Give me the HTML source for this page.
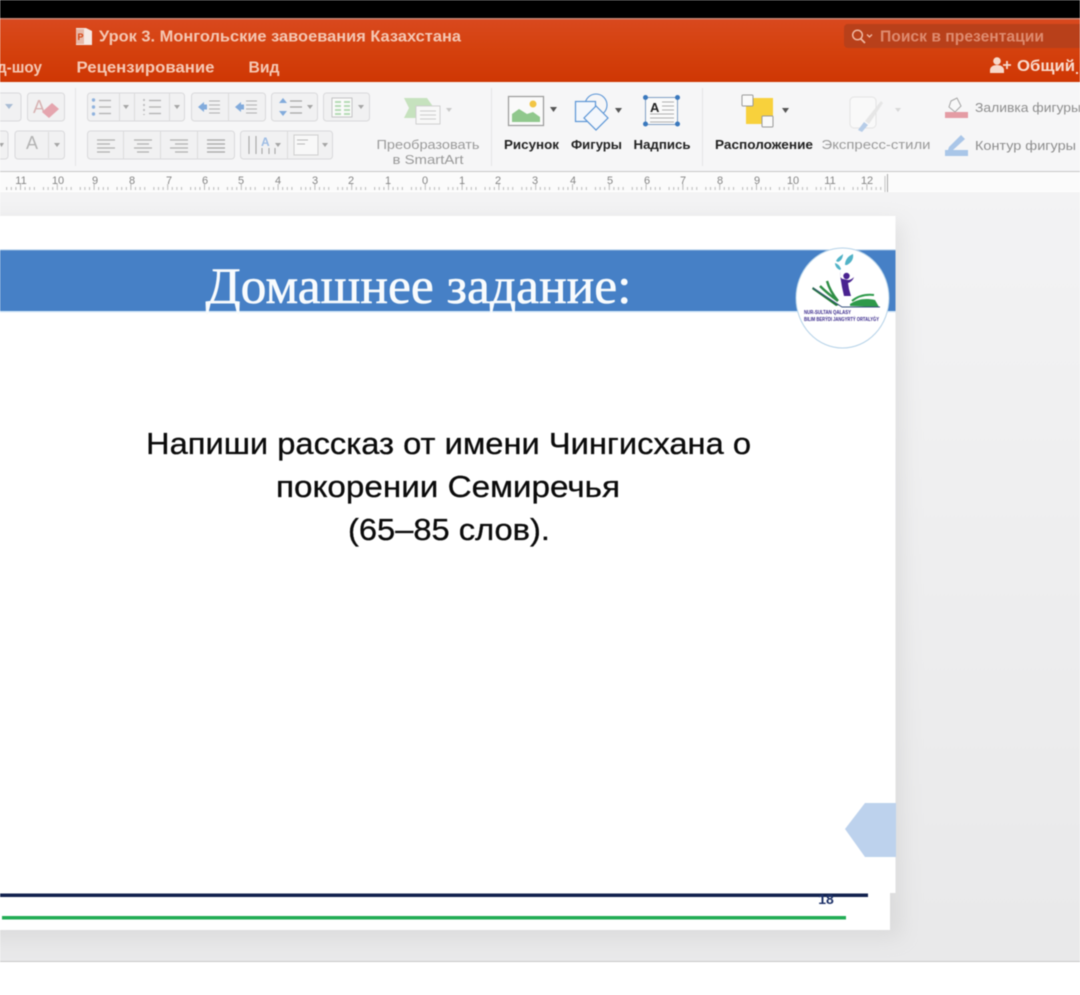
<!DOCTYPE html>
<html lang="ru">
<head>
<meta charset="utf-8">
<title>Урок 3. Монгольские завоевания Казахстана</title>
<style>
html,body{margin:0;padding:0;width:1080px;height:995px;overflow:hidden;background:#fff}
svg{display:block;filter:blur(.5px)}
text{font-family:"Liberation Sans","DejaVu Sans",sans-serif}
.serif{font-family:"Liberation Serif",serif}
.tb{font-size:13px;fill:#222;font-weight:700}
.gr{font-size:13px;fill:#9a9a9a}
.rn{font-size:11px;fill:#858585;text-anchor:middle}
.btn{fill:#f1f1f2;stroke:#d9d9db;stroke-width:1}
</style>
</head>
<body>
<svg width="1080" height="995" viewBox="0 0 1080 995" xmlns="http://www.w3.org/2000/svg">
<defs>
<linearGradient id="hd" x1="0" y1="0" x2="0" y2="1"><stop offset="0" stop-color="#d9491f"/><stop offset=".45" stop-color="#d5420f"/><stop offset="1" stop-color="#cf3704"/></linearGradient>
<linearGradient id="ws" x1="0" y1="0" x2="0" y2="1"><stop offset="0" stop-color="#f3f3f4"/><stop offset="1" stop-color="#e9e9ea"/></linearGradient>
<pattern id="tk" x="2.100" y="172" width="36.800" height="20" patternUnits="userSpaceOnUse">
<path d="M4.600 15v3M9.200 15v3M13.800 15v3M18.400 12v6M23 15v3M27.600 15v3M32.200 15v3" stroke="#a8a8a8" stroke-width=".8"/>
</pattern>
<filter id="sh" x="-5%" y="-5%" width="110%" height="110%"><feGaussianBlur stdDeviation="10"/></filter>
</defs>

<rect width="1080" height="995" fill="#fff"/>
<rect width="1080" height="18" fill="#000"/>
<rect y="18" width="1080" height="64" fill="url(#hd)"/>
<rect y="18" width="1080" height="1.500" fill="#c98574"/>

<!-- title bar -->
<path d="M76 28h10l6 3v14H76z" fill="#f6e9e4"/>
<path d="M76 29h8v15h-8z" fill="#e7b8a8"/>
<text x="77.500" y="40" font-size="9" font-weight="700" fill="#d5420f">P</text>
<text x="99" y="41.500" font-size="15.500" font-weight="700" fill="#f4c7b3" textLength="362" lengthAdjust="spacingAndGlyphs">Урок 3. Монгольские завоевания Казахстана</text>
<text x="-3" y="72.500" font-size="15.500" font-weight="700" fill="#f5c9b5" textLength="45" lengthAdjust="spacingAndGlyphs">д-шоу</text>
<text x="76.500" y="72.500" font-size="15.500" font-weight="700" fill="#f5c9b5" textLength="138" lengthAdjust="spacingAndGlyphs">Рецензирование</text>
<text x="248.500" y="72.500" font-size="15.500" font-weight="700" fill="#f5c9b5" textLength="31" lengthAdjust="spacingAndGlyphs">Вид</text>

<rect x="844" y="24" width="240" height="24" rx="4" fill="#b8401a"/>
<circle cx="857.500" cy="35" r="4.800" fill="none" stroke="#f0b9a3" stroke-width="1.500"/>
<path d="M861 39l4 4" stroke="#f0b9a3" stroke-width="1.700"/>
<path d="M867 34.500l2.500 2.500 2.500-2.500" stroke="#f0b9a3" stroke-width="1.300" fill="none"/>
<text x="880" y="41.500" font-size="15.500" font-weight="700" fill="#de8b6f" textLength="164" lengthAdjust="spacingAndGlyphs">Поиск в презентации</text>

<circle cx="997" cy="61" r="3.800" fill="#f7d9cb"/>
<path d="M990 73v-3c0-3 3-5 7-5s7 2 7 5v3z" fill="#f7d9cb"/>
<path d="M1007 61v8M1003 65h8" stroke="#f7d9cb" stroke-width="1.800"/>
<text x="1017" y="71" font-size="15.500" font-weight="700" fill="#f9dccf" textLength="58" lengthAdjust="spacingAndGlyphs">Общий</text>
<rect x="1076" y="72" width="2" height="2" fill="#f9dccf"/>

<!-- toolbar -->
<rect y="82" width="1080" height="89" fill="#f6f6f7"/>
<rect y="171" width="1080" height="1" fill="#c9c9c9"/>
<path d="M75.500 88v78M491.500 88v78M702.500 88v78" stroke="#e5e5e6"/>

<!-- left clipped buttons -->
<rect x="-8" y="93" width="29" height="28" rx="3" class="btn"/>
<path d="M5 104h8l-4 5z" fill="#a9bcd4"/>
<rect x="27.500" y="93" width="37" height="28" rx="3" class="btn"/>
<text x="33" y="113" font-size="18" fill="#d8b3b3">A</text>
<path d="M42 112l10-9 7 6-10 9z" fill="#e5a5ae"/>
<rect x="-8" y="131" width="16" height="28" rx="3" class="btn"/>
<path d="M-1 143h5l-2.500 4z" fill="#a5a5a5"/>
<rect x="15" y="131" width="49.500" height="28" rx="3" class="btn"/>
<path d="M48.500 132v26" stroke="#dcdcdc"/>
<text x="26" y="149" font-size="18" fill="#b3b3b3">A</text>
<path d="M54 143h6l-3 4z" fill="#a5a5a5"/>

<!-- row 1 -->
<rect x="87.500" y="93" width="97" height="28" rx="3" class="btn"/>
<path d="M134.500 93v28M119.500 93v28M169.500 93v28" stroke="#dcdcdc"/>
<circle cx="93.500" cy="100" r="1.700" fill="#8fb2de"/><circle cx="93.500" cy="107" r="1.700" fill="#8fb2de"/><circle cx="93.500" cy="114" r="1.700" fill="#8fb2de"/>
<path d="M99 100.500h12M99 107h12M99 113.500h12M149 100.500h12M149 107h12M149 113.500h12" stroke="#b0b0b0" stroke-width="1.200"/>
<path d="M144 99v16" stroke="#b5b5b5" stroke-width="1.500" stroke-dasharray="2 3"/>
<path d="M123 105h6l-3 4zM174 105h6l-3 4z" fill="#a5a5a5"/>
<rect x="191.500" y="93" width="74" height="28" rx="3" class="btn"/>
<path d="M228.500 93v28" stroke="#dcdcdc"/>
<path d="M198 107l6-5v10zM235 107l6-5v10z" fill="#82abdc"/><rect x="203" y="104.500" width="4" height="5" fill="#82abdc"/><rect x="240" y="104.500" width="4" height="5" fill="#82abdc"/>
<path d="M209 101h11M209 105h11M209 109h11M209 113h11M246 101h11M246 105h11M246 109h11M246 113h11" stroke="#b0b0b0" stroke-width="1.100"/>
<rect x="271.500" y="93" width="46" height="28" rx="3" class="btn"/>
<path d="M283 98l-4 5h8zM283 116l-4-5h8z" fill="#82abdc"/>
<path d="M290 101h12M290 107h12M290 113h12" stroke="#a5a5a5" stroke-width="1.300"/>
<path d="M307 105h6l-3 4z" fill="#a5a5a5"/>
<rect x="323.500" y="93" width="46" height="28" rx="3" class="btn"/>
<rect x="332" y="98" width="20" height="19" fill="#fafafa" stroke="#c4c4c4"/>
<path d="M335 102h6M344 102h6M335 106h6M344 106h6M335 110h6M344 110h6M335 114h6M344 114h6" stroke="#b5dcb5" stroke-width="2"/>
<path d="M358 105h6l-3 4z" fill="#a5a5a5"/>

<!-- row 2 -->
<rect x="87.500" y="131" width="147" height="28" rx="3" class="btn"/>
<path d="M123.500 131v28M160.500 131v28M197.500 131v28" stroke="#dcdcdc"/>
<path d="M97 140h18M97 144h13M97 148h18M97 152h13" stroke="#b0b0b0" stroke-width="1.200"/>
<path d="M134 140h18M137 144h12M134 148h18M137 152h12" stroke="#b0b0b0" stroke-width="1.200"/>
<path d="M170 140h18M175 144h13M170 148h18M175 152h13" stroke="#b0b0b0" stroke-width="1.200"/>
<path d="M207 140h18M207 144h18M207 148h18M207 152h18" stroke="#a5a5a5" stroke-width="1.300"/>
<rect x="240.500" y="131" width="92" height="28" rx="3" class="btn"/>
<path d="M287.500 131v28" stroke="#dcdcdc"/>
<path d="M249 136v18M256 136v18M262 148v6M269 148v6M275 148v6" stroke="#a5a5a5" stroke-width="1.100"/>
<text x="261" y="146" font-size="12" font-weight="700" fill="#9dbce4">A</text>
<path d="M275 143h6l-3 4z" fill="#a5a5a5"/>
<rect x="294" y="135" width="24" height="20" fill="#f8f8f8" stroke="#cfcfcf"/>
<path d="M297 140h11M297 144h8" stroke="#b8b8b8"/>
<path d="M322 143h6l-3 4z" fill="#a5a5a5"/>

<!-- SmartArt -->
<path d="M404 98h23l7 10-7 10h-23l5-10z" fill="#c6e2be"/>
<rect x="416" y="106" width="24" height="18" fill="#f8f8f8" stroke="#d0d0d0"/>
<path d="M420 111h16M420 115h16M420 119h16" stroke="#cccccc"/>
<path d="M446 108h6l-3 4z" fill="#c9c9c9"/>
<text x="428" y="149" class="gr" text-anchor="middle" textLength="103" lengthAdjust="spacingAndGlyphs">Преобразовать</text>
<text x="428" y="164" class="gr" text-anchor="middle" textLength="71" lengthAdjust="spacingAndGlyphs">в SmartArt</text>

<!-- Picture -->
<rect x="508.500" y="96.500" width="35" height="29" fill="#fafafa" stroke="#9a9a9a" stroke-width="1.200"/>
<path d="M512 122v-8l7-5 8 5 6-2 7 5v5z" fill="#90c88d"/>
<circle cx="533" cy="104" r="3.500" fill="#f2c544"/>
<path d="M550 107h7l-3.500 5z" fill="#555"/>
<text x="531.500" y="149" class="tb" text-anchor="middle" textLength="55" lengthAdjust="spacingAndGlyphs">Рисунок</text>

<!-- Shapes -->
<circle cx="596" cy="105" r="11" fill="#f6f6f7" stroke="#5a95d6" stroke-width="1.100"/>
<rect x="575.500" y="101.500" width="20" height="20" fill="#f3f7fc" stroke="#5a95d6" stroke-width="1.200"/>
<path d="M596 106l12 12-12 12-12-12z" fill="#f3f7fc" stroke="#5a95d6" stroke-width="1.200"/>
<path d="M615 108h7l-3.500 5z" fill="#555"/>
<text x="596.500" y="149" class="tb" text-anchor="middle" textLength="51" lengthAdjust="spacingAndGlyphs">Фигуры</text>

<!-- Textbox -->
<rect x="645.500" y="97.500" width="32" height="27" fill="#fafafa" stroke="#7f9fc4"/>
<circle cx="645.500" cy="97.500" r="2.500" fill="#3a78bd"/><circle cx="677.500" cy="97.500" r="2.500" fill="#3a78bd"/><circle cx="645.500" cy="124" r="2.500" fill="#3a78bd"/><circle cx="677.500" cy="124" r="2.500" fill="#3a78bd"/>
<text x="650" y="112" font-size="13" font-weight="700" fill="#222">A</text>
<path d="M662 102h12M662 106h12M662 110h12M650 114h24M650 118h24M650 122h24" stroke="#b0b0b0"/>
<text x="662" y="149" class="tb" text-anchor="middle" textLength="57" lengthAdjust="spacingAndGlyphs">Надпись</text>

<!-- Arrange -->
<rect x="746" y="98" width="27" height="26" fill="#f8d13c"/>
<rect x="742" y="95" width="11" height="11" rx="1" fill="#fafafa" stroke="#999"/>
<rect x="762" y="116" width="11" height="11" rx="1" fill="#fafafa" stroke="#999"/>
<path d="M782 108h7l-3.500 5z" fill="#555"/>
<text x="764" y="149" class="tb" text-anchor="middle" textLength="98" lengthAdjust="spacingAndGlyphs">Расположение</text>

<!-- Quick styles -->
<rect x="850" y="97" width="26" height="31" rx="4" fill="#f9f9f9" stroke="#e4e4e4"/>
<path d="M858 130l6-8 4 3-6 7z" fill="#b7cde8"/>
<path d="M865 121l16-20 2 2-14 21z" fill="#e6e6e6"/>
<path d="M895 108h6l-3 4z" fill="#d8d8d8"/>
<text x="876" y="149" class="gr" text-anchor="middle" textLength="109" lengthAdjust="spacingAndGlyphs">Экспресс-стили</text>

<!-- Fill/Outline -->
<path d="M951 101l6-3 4 8-6 6-6-5z" fill="#f8f8f8" stroke="#a5a5a5"/>
<rect x="945" y="112" width="23" height="6" fill="#e49ca4"/>
<text x="975" y="112" class="gr" style="fill:#8e8e8e" textLength="106" lengthAdjust="spacingAndGlyphs">Заливка фигуры</text>
<path d="M949 147l12-12 4 4-12 11h-5z" fill="#aac6e8"/>
<rect x="945" y="150" width="23" height="6" fill="#a9c6e8"/>
<text x="975" y="150" class="gr" style="fill:#8e8e8e" textLength="101" lengthAdjust="spacingAndGlyphs">Контур фигуры</text>

<!-- ruler -->
<rect y="172" width="1080" height="19" fill="#fbfbfb"/>
<rect x="0" y="172" width="885" height="20" fill="url(#tk)"/>
<path d="M887.500 174v18" stroke="#a8a8a8"/>
<path d="M885 176v16" stroke="#c4c4c4"/>
<text class="rn" x="21" y="184">11</text><text class="rn" x="58" y="184">10</text><text class="rn" x="95" y="184">9</text><text class="rn" x="132" y="184">8</text><text class="rn" x="169" y="184">7</text><text class="rn" x="205" y="184">6</text><text class="rn" x="241" y="184">5</text><text class="rn" x="278" y="184">4</text><text class="rn" x="315" y="184">3</text><text class="rn" x="351" y="184">2</text><text class="rn" x="388" y="184">1</text><text class="rn" x="425" y="184">0</text><text class="rn" x="462" y="184">1</text><text class="rn" x="498" y="184">2</text><text class="rn" x="535" y="184">3</text><text class="rn" x="573" y="184">4</text><text class="rn" x="610" y="184">5</text><text class="rn" x="647" y="184">6</text><text class="rn" x="683" y="184">7</text><text class="rn" x="720" y="184">8</text><text class="rn" x="757" y="184">9</text><text class="rn" x="793" y="184">10</text><text class="rn" x="830" y="184">11</text><text class="rn" x="867" y="184">12</text>

<!-- workspace -->
<rect y="192" width="1080" height="769" fill="url(#ws)"/>
<rect y="961" width="1080" height="1" fill="#c8c8c8"/>
<rect x="-20" y="222" width="922" height="716" fill="#c4c4c4" opacity=".4" filter="url(#sh)"/>

<!-- slide -->
<rect x="0" y="216" width="895.500" height="677" fill="#fff"/>
<rect x="0" y="893" width="890" height="37" fill="#fff"/>
<rect x="0" y="250" width="895.500" height="61.500" fill="#4680c6"/>
<rect x="0" y="249.500" width="895.500" height="1" fill="#9ec0e2"/>
<rect x="0" y="311" width="895.500" height="1.500" fill="#d8eaf8"/>
<text class="serif" x="205.500" y="303" font-size="50.500" fill="#f8fbfd" stroke="#f8fbfd" stroke-width=".6" textLength="426" lengthAdjust="spacingAndGlyphs">Домашнее задание:</text>

<text x="146" y="454" font-size="31" fill="#0b0b0b" stroke="#0b0b0b" stroke-width=".3" textLength="605" lengthAdjust="spacingAndGlyphs">Напиши рассказ от имени Чингисхана о</text>
<text x="276" y="497" font-size="31" fill="#0b0b0b" stroke="#0b0b0b" stroke-width=".3" textLength="344" lengthAdjust="spacingAndGlyphs">покорении Семиречья</text>
<text x="348" y="540" font-size="31" fill="#0b0b0b" stroke="#0b0b0b" stroke-width=".3" textLength="202" lengthAdjust="spacingAndGlyphs">(65–85 слов).</text>

<!-- logo -->
<ellipse cx="842.500" cy="298" rx="46.500" ry="50" fill="#fff" stroke="#b5d2e8" stroke-width="1"/>
<path d="M836 261c2-4 5-5 7-7 0 4-2 7-5 8zM845 265c0-5 3-9 8-11 1 5-2 9-6 11zM841 269c-1-3-3-5-6-6 0 3 2 6 5 7z" fill="#52b3c7"/>
<circle cx="846.500" cy="276" r="3.200" fill="#4a2390"/>
<path d="M840 271c0 5 0 7 3 8l5 1c2 0 4-1 6-3-1 3-3 5-6 6l1 6 2 7-7 0-2-9c-1-6-2-11-2-16z" fill="#4a2390"/>
<path d="M813 287l26 18-3 1-24-17z" fill="#227a36"/>
<path d="M820 286c5 5 11 10 18 15M827 281c2 7 6 14 11 20" stroke="#2f8e45" stroke-width="2.400" fill="none"/>
<path d="M850 304c8-5 15-6 25-4l4 7-29-1z" fill="#2e9a4a"/>
<path d="M852 301c6-5 13-7 22-6" stroke="#2e9a4a" stroke-width="2" fill="none"/>
<path d="M813 288l29 19h38" stroke="#36507c" stroke-width="1" fill="none"/>
<text x="804" y="314" font-size="5.500" font-weight="700" fill="#39298b" textLength="47" lengthAdjust="spacingAndGlyphs">NUR-SULTAN QALASY</text>
<text x="804" y="321" font-size="5.500" font-weight="700" fill="#39298b" textLength="75" lengthAdjust="spacingAndGlyphs">BILIM BERÝDI JANGYRTÝ ORTALYĠY</text>

<!-- arrow -->
<path d="M845 829l20-26h31v54h-31z" fill="#bdd2ed"/>

<!-- bottom -->
<rect x="0" y="893.500" width="868" height="3.500" fill="#12224e"/>
<text x="826" y="904" font-size="14" font-weight="700" fill="#1d3168" text-anchor="middle">18</text>
<rect x="2" y="916" width="844" height="3.500" fill="#22ad55"/>
</svg>
</body>
</html>
